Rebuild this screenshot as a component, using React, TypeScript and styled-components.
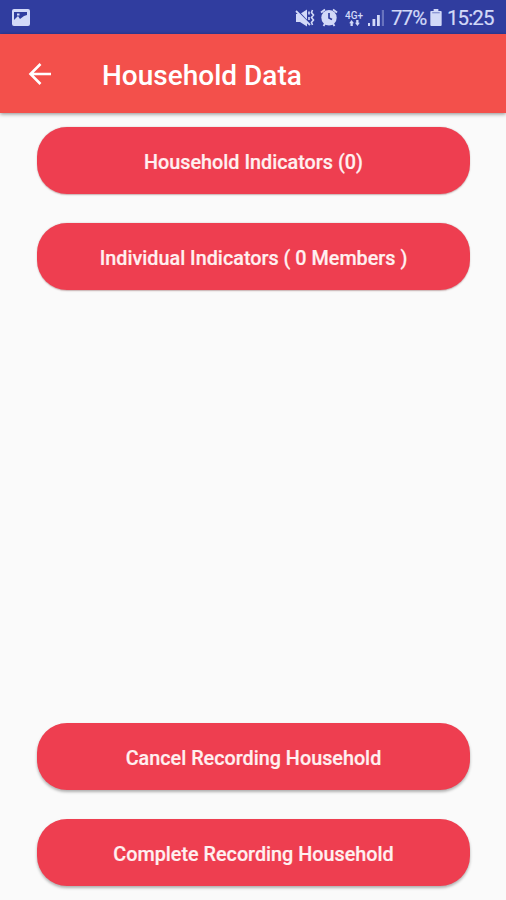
import React from "react";
import styled, { createGlobalStyle } from "styled-components";

const GlobalStyle = createGlobalStyle`
  *, *::before, *::after { box-sizing: border-box; }
  body { margin: 0; background: #fafafa; font-family: Roboto, sans-serif; }
`;

const Screen = styled.div`
  display: flex;
  flex-direction: column;
  height: 900px;
  overflow: hidden;
  background: #fafafa;
`;

const StatusBar = styled.header`
  display: flex;
  flex: none;
  align-items: center;
  justify-content: space-between;
  height: 34px;
  padding: 1px 12px 0;
  background: #303d9f;
  color: #d2d9f8;
`;

const StatusGroup = styled.div`
  display: flex;
  align-items: center;
`;

const StatusIcon = styled.svg<{ $gap?: number }>`
  display: block;
  flex: none;
  margin-right: ${({ $gap = 0 }) => $gap}px;
  fill: currentColor;
`;

const StatusText = styled.span<{ $width: number }>`
  width: ${({ $width }) => $width}px;
  font-size: 20.5px;
  line-height: 32px;
  letter-spacing: -0.9px;
  white-space: nowrap;
  -webkit-text-stroke: 0.2px currentColor;
`;

const AppBar = styled.div`
  display: flex;
  flex: none;
  align-items: center;
  height: 79px;
  padding: 0 28px;
  gap: 50px;
  background: #f3504b;
  box-shadow: 0 1px 4px rgba(0, 0, 0, 0.45);
  color: #fff;
`;

const BackButton = styled.button`
  display: flex;
  padding: 0;
  border: 0;
  background: none;
  color: #fff;
`;

const Title = styled.h1`
  margin: 0;
  padding-top: 5px;
  font-size: 28px;
  font-weight: 500;
  line-height: 36px;
  white-space: nowrap;
`;

const Content = styled.main`
  display: flex;
  flex: 1;
  flex-direction: column;
  justify-content: space-between;
  padding: 14px 36px 14px 37px;
`;

const ButtonGroup = styled.div`
  display: flex;
  flex-direction: column;
  gap: 29px;
`;

const ActionButton = styled.button<{ $raised?: boolean }>`
  height: 67px;
  padding: 5px 0 0;
  border: 0;
  border-radius: 30px;
  background: #ee3e50;
  box-shadow: ${({ $raised }) =>
    $raised ? "0 2px 3px rgba(0, 0, 0, 0.3)" : "0 0.5px 1.5px rgba(80, 0, 0, 0.3)"};
  color: #fff0f0;
  font: 500 19.8px/26px Roboto, sans-serif;
  -webkit-text-stroke: 0.2px currentColor;
`;

export default function App() {
  return (
    <>
      <GlobalStyle />
      <Screen>
        <StatusBar>
          <StatusIcon width="18" height="17" viewBox="0 0 18 17">
            <path fillRule="evenodd" d="M2 0h14a2 2 0 0 1 2 2v13a2 2 0 0 1-2 2H2a2 2 0 0 1-2-2V2a2 2 0 0 1 2-2Zm0 3v8l4-4 2 3 4-3 3-1V3ZM5 4.5h2.5v2H5Z" />
          </StatusIcon>
          <StatusGroup>
            <StatusIcon $gap={5} width="20" height="20" viewBox="0 0 20 20">
              <path d="M1 6h4l7-4.5v17L5 14H1Z" />
              <path d="m1 1 14 15" stroke="#303d9f" strokeWidth="1.5" />
              <path d="m1 3 14 14" fill="none" stroke="currentColor" strokeWidth="1.8" />
              <path d="M14 3.5v3M14 9v3M17.5 2l-1 2.5 2 2.5-2 2.5 2 2.5-2 2.5 1 2.5" fill="none" stroke="currentColor" strokeWidth="1.6" />
            </StatusIcon>
            <StatusIcon $gap={7} width="18" height="19" viewBox="0 0 18 19">
              <circle cx="9" cy="9.8" r="7.7" />
              <path d="m1 4.5 4-3M17 4.5l-4-3M3.5 18l2-3M14.5 18l-2-3" stroke="currentColor" strokeWidth="1.9" />
              <path d="M9 5v5l3 1.5" fill="none" stroke="#303d9f" strokeWidth="1.7" />
            </StatusIcon>
            <StatusIcon $gap={4} width="19" height="20" viewBox="0 0 19 20">
              <text x="0" y="10.5" fontFamily="Roboto, sans-serif" fontSize="10.5" fontWeight="500" textLength="18" lengthAdjust="spacingAndGlyphs">4G+</text>
              <path d="M6.5 12 9 15.2H7.8v2.8H5.5v-2.8H4.2ZM12.5 18 10 14.8h1.2V12h2.3v2.8h1.3Z" />
            </StatusIcon>
            <StatusIcon $gap={6} width="17" height="17" viewBox="0 0 17 17">
              <path d="M0 14h2v3H0ZM4.5 10h2.8v7H4.5ZM9 6h2.8v11H9Z" />
              <path d="M13.8 1h2.2v16h-2.2Z" opacity=".35" />
            </StatusIcon>
            <StatusText $width={39}>77%</StatusText>
            <StatusIcon $gap={5} width="12" height="17" viewBox="0 0 12 18">
              <path d="M3.5 0h5v2H11q1 0 1 1v14q0 1-1 1H1q-1 0-1-1V3q0-1 1-1h2.5Z" />
              <path d="M2 4h8" stroke="#6d79c3" />
            </StatusIcon>
            <StatusText $width={47}>15:25</StatusText>
          </StatusGroup>
        </StatusBar>
        <AppBar>
          <BackButton aria-label="Back">
            <svg width="24" height="24" viewBox="0 0 24 24">
              <path d="M23 12H2.5M12.5 2 2.5 12l10 10" fill="none" stroke="currentColor" strokeWidth="2.6" />
            </svg>
          </BackButton>
          <Title>Household Data</Title>
        </AppBar>
        <Content>
          <ButtonGroup>
            <ActionButton>Household Indicators (0)</ActionButton>
            <ActionButton>Individual Indicators ( 0 Members )</ActionButton>
          </ButtonGroup>
          <ButtonGroup>
            <ActionButton $raised>Cancel Recording Household</ActionButton>
            <ActionButton $raised>Complete Recording Household</ActionButton>
          </ButtonGroup>
        </Content>
      </Screen>
    </>
  );
}
